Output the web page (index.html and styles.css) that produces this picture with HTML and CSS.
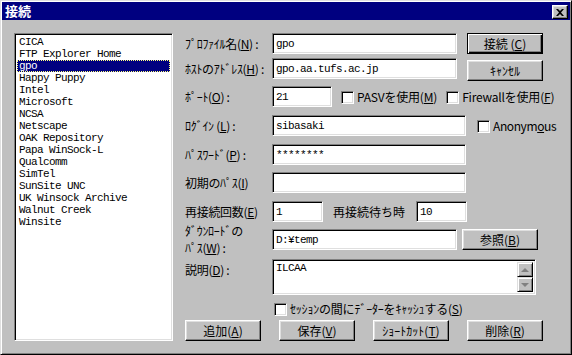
FILE: index.html
```html
<!doctype html>
<html>
    <head>
        <meta charset="UTF-8">
        <title>接続</title>
        <link rel="stylesheet" href="styles.css">
    </head>
    <body>
        <div class="window">
            <div class="titlebar">
                <span class="title">接続</span>
                <button class="close" type="button">
                    <svg width="8" height="7" viewBox="0 0 8 7">
                        <path d="M0 0h2l2 2 2-2h2L5 3.5 8 7H6L4 5 2 7H0l3-3.5z" fill="#000"/>
                    </svg>
                </button>
            </div>

            <div class="content">
                <ul class="sites">
                    <li>CICA</li>
                    <li>FTP Explorer Home</li>
                    <li class="selected">gpo</li>
                    <li>Happy Puppy</li>
                    <li>Intel</li>
                    <li>Microsoft</li>
                    <li>NCSA</li>
                    <li>Netscape</li>
                    <li>OAK Repository</li>
                    <li>Papa WinSock-L</li>
                    <li>Qualcomm</li>
                    <li>SimTel</li>
                    <li>SunSite UNC</li>
                    <li>UK Winsock Archive</li>
                    <li>Walnut Creek</li>
                    <li>Winsite</li>
                </ul>

                <form class="profile">
                    <div class="row">
                        <label class="label"><span>ﾌﾟﾛﾌｧｲﾙ名(<u>N</u>) :</span></label>
                        <input class="field wide" type="text" value="gpo">
                        <button class="btn default side" type="button">接続 (<u>C</u>)</button>
                    </div>
                    <div class="row">
                        <label class="label"><span>ﾎｽﾄのｱﾄﾞﾚｽ(<u>H</u>) :</span></label>
                        <input class="field wide" type="text" value="gpo.aa.tufs.ac.jp">
                        <button class="btn side lower" type="button">ｷｬﾝｾﾙ</button>
                    </div>
                    <div class="row">
                        <label class="label"><span>ﾎﾟｰﾄ(<u>O</u>) :</span></label>
                        <input class="field port" type="text" value="21">
                        <label class="option pasv"><input class="check" type="checkbox"><span>PASVを使用(<u>M</u>)</span></label>
                        <label class="option firewall"><input class="check" type="checkbox"><span>Firewallを使用(<u>F</u>)</span></label>
                    </div>
                    <div class="row">
                        <label class="label"><span>ﾛｸﾞｲﾝ (<u>L</u>) :</span></label>
                        <input class="field long" type="text" value="sibasaki">
                        <label class="option anon"><input class="check" type="checkbox"><span>Anonym<u>o</u>us</span></label>
                    </div>
                    <div class="row">
                        <label class="label"><span>ﾊﾟｽﾜｰﾄﾞ(<u>P</u>) :</span></label>
                        <input class="field long" type="text" value="********">
                    </div>
                    <div class="row">
                        <label class="label"><span>初期のﾊﾟｽ(<u>I</u>)</span></label>
                        <input class="field long" type="text" value="">
                    </div>
                    <div class="row">
                        <label class="label"><span>再接続回数(<u>E</u>)</span></label>
                        <input class="field count" type="text" value="1">
                        <label class="wait"><span>再接続待ち時</span></label>
                        <input class="field count" type="text" value="10">
                    </div>
                    <div class="row">
                        <label class="label two-line"><span>ﾀﾞｳﾝﾛｰﾄﾞの<br>ﾊﾟｽ(<u>W</u>) :</span></label>
                        <input class="field wide" type="text" value="D:¥temp">
                        <button class="btn browse" type="button">参照(<u>B</u>)</button>
                    </div>
                    <div class="row">
                        <label class="label memo-label"><span>説明(<u>D</u>) :</span></label>
                        <div class="field memo">
                            <textarea>ILCAA</textarea>
                            <div class="scrollbar">
                                <span class="arrow up"></span>
                                <span class="arrow down"></span>
                            </div>
                        </div>
                    </div>
                    <div class="row">
                        <label class="option cache"><input class="check" type="checkbox"><span>ｾｯｼｮﾝの間にﾃﾞｰﾀｰをｷｬｯｼｭする(<u>S</u>)</span></label>
                    </div>
                    <div class="row actions">
                        <button class="btn" type="button">追加(<u>A</u>)</button>
                        <button class="btn" type="button">保存(<u>V</u>)</button>
                        <button class="btn" type="button">ｼｮｰﾄｶｯﾄ(<u>T</u>)</button>
                        <button class="btn" type="button">削除(<u>R</u>)</button>
                    </div>
                </form>
            </div>
        </div>
    </body>
</html>
```

FILE: styles.css
```css
:root {
    --face: #c0c0c0;
    --light: #dfdfdf;
    --shadow: #808080;
    --navy: #000080;
}

html, body {
    margin: 0;
    background-color: var(--face);
}

* {
    font-family: "Noto Sans CJK JP", sans-serif;
    font-size: 12px;
    color: #000;
}

u {
    text-underline-offset: 1px;
}

.window {
    box-sizing: border-box;
    width: 572px;
    height: 355px;
    background-color: var(--face);
    border: 1px solid;
    border-color: var(--light) #000 #000 var(--light);
    box-shadow: inset 1px 1px #fff, inset -1px -1px var(--shadow);
    padding: 1px;
    display: flex;
    flex-direction: column;
}

/* title bar */

.titlebar {
    height: 18px;
    background-color: var(--navy);
    display: flex;
    align-items: center;
    justify-content: space-between;
    padding: 0 2px 0 3px;
}

.title {
    color: #fff;
    font-weight: bold;
    font-size: 13px;
    line-height: 18px;
}

.close {
    box-sizing: border-box;
    width: 16px;
    height: 14px;
    margin-top: 2px;
    padding: 0;
    display: flex;
    align-items: center;
    justify-content: center;
    background-color: var(--face);
    border: 1px solid;
    border-color: #fff #000 #000 #fff;
    box-shadow: inset -1px -1px var(--shadow), inset 1px 1px var(--light);
}

/* body */

.content {
    display: flex;
    padding: 13px 0 0 12px;
}

.sites {
    box-sizing: border-box;
    width: 159px;
    height: 308px;
    margin: 0;
    padding: 2px;
    list-style: none;
    background-color: #fff;
    border: 1px solid;
    border-color: var(--shadow) #fff #fff var(--shadow);
    box-shadow: inset 1px 1px #000, inset -1px -1px var(--light);
}

.sites li {
    height: 12px;
    line-height: 12px;
    padding-left: 2px;
    font-family: "Liberation Mono", monospace;
    font-size: 11px;
    letter-spacing: -0.6px;
    white-space: nowrap;
}

.sites li.selected {
    background-color: var(--navy);
    color: #fff;
    outline: 1px dotted #ffff80;
    outline-offset: -1px;
}

.profile {
    width: 358px;
    margin-left: 12px;
    display: grid;
    grid-template-columns: minmax(0, 1fr);
    grid-template-rows: 25px 28px 29px 29px 28px 29px 28px 30px 41px 20px 21px;
}

.row {
    min-width: 0;
    display: flex;
    align-items: flex-start;
}

.label {
    width: 87px;
    height: 21px;
    flex: none;
    display: flex;
    align-items: center;
    white-space: nowrap;
    line-height: 14px;
    letter-spacing: -0.3px;
}

.label.two-line {
    margin-top: -7px;
    height: 34px;
    line-height: 17px;
}

.label.memo-label {
    align-items: flex-start;
    padding-top: 4px;
}

/* sunken fields */

.field {
    box-sizing: border-box;
    height: 21px;
    flex: none;
    margin: 0;
    padding: 0 3px;
    background-color: #fff;
    border: 1px solid;
    border-color: var(--shadow) #fff #fff var(--shadow);
    box-shadow: inset 1px 1px #000, inset -1px -1px var(--light);
    font-family: "Liberation Mono", monospace;
    font-size: 11px;
    letter-spacing: -0.6px;
    outline: none;
}

.field.wide { width: 185px; }
.field.long { width: 194px; }
.field.port { width: 60px; }
.field.count { width: 51px; }

.wait {
    width: 93px;
    height: 21px;
    flex: none;
    display: flex;
    align-items: center;
    padding-left: 10px;
    box-sizing: border-box;
    white-space: nowrap;
}

.memo {
    width: 264px;
    height: 36px;
    padding: 2px 2px 2px 3px;
    display: flex;
}

.memo textarea {
    flex: 1;
    border: none;
    padding: 0;
    margin: 0;
    resize: none;
    outline: none;
    font-family: "Liberation Mono", monospace;
    font-size: 11px;
    letter-spacing: -0.6px;
    line-height: 12px;
}

.scrollbar {
    width: 16px;
    display: flex;
    flex-direction: column;
    justify-content: space-between;
    background: repeating-conic-gradient(#fff 0 25%, var(--face) 0 50%) 0 0 / 2px 2px;
}

.arrow {
    box-sizing: border-box;
    height: 15px;
    display: flex;
    align-items: center;
    justify-content: center;
    background-color: var(--face);
    border: 1px solid;
    border-color: var(--light) #000 #000 var(--light);
    box-shadow: inset 1px 1px #fff, inset -1px -1px var(--shadow);
}

.arrow::before {
    content: "";
    border-left: 4px solid transparent;
    border-right: 4px solid transparent;
}

.arrow.up::before {
    border-bottom: 4px solid var(--shadow);
}

.arrow.down::before {
    border-top: 4px solid var(--shadow);
}

/* checkboxes */

.option {
    height: 21px;
    display: flex;
    align-items: center;
    gap: 3px;
    white-space: nowrap;
    letter-spacing: -0.2px;
}

.check {
    appearance: none;
    flex: none;
    box-sizing: border-box;
    width: 13px;
    height: 13px;
    margin: 2px 0 0;
    background-color: #fff;
    border: 1px solid;
    border-color: var(--shadow) #fff #fff var(--shadow);
    box-shadow: inset 1px 1px #000, inset -1px -1px var(--light);
}

.option.pasv { margin-left: 9px; }
.option.firewall { margin-left: 9px; }
.option.anon { margin-left: 11px; letter-spacing: -0.4px; }
.option.cache { margin-left: 89px; height: 16px; }

/* buttons */

.btn {
    box-sizing: border-box;
    width: 76px;
    height: 21px;
    padding: 0;
    flex: none;
    background-color: var(--face);
    border: 1px solid;
    border-color: #fff #000 #000 #fff;
    box-shadow: inset -1px -1px var(--shadow), inset 1px 1px var(--light);
    white-space: nowrap;
}

.btn.default {
    border-color: #000;
    box-shadow: inset 1px 1px #fff, inset -1px -1px #000, inset -2px -2px var(--shadow);
}

.btn.side { margin-left: 10px; }
.btn.lower { margin-top: 2px; }
.btn.browse { margin-left: 5px; }

.actions {
    justify-content: space-between;
}
```
